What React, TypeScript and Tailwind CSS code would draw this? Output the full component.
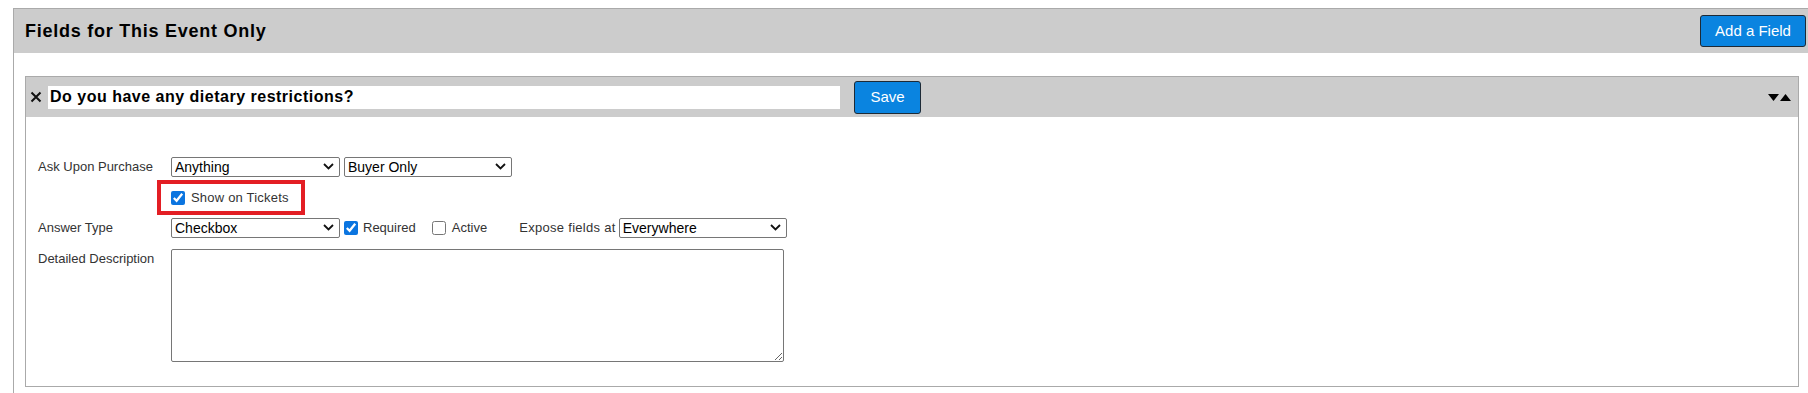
import { ChangeEvent, useState } from "react";

function Select({ value, options, width }: { value: string; options: string[]; width: string }) {
    const [val, setVal] = useState(value);
    return (
        <div className={`relative ${width} h-[20px]`}>
            <select
                value={val}
                onChange={(e: ChangeEvent<HTMLSelectElement>) => setVal(e.target.value)}
                className="appearance-none w-full h-full bg-white border border-[#767676] rounded-[2px] pl-[3px] pr-[20px] text-[14px] leading-[18px] text-black outline-none"
            >
                {options.map((o) => (
                    <option key={o}>{o}</option>
                ))}
            </select>
            <svg className="absolute right-[6px] top-[6px] pointer-events-none" width="11" height="7" viewBox="0 0 11 7">
                <path d="M1 1l4.5 4.5L10 1" fill="none" stroke="#111" strokeWidth="1.8" />
            </svg>
        </div>
    );
}

function Check({ checked }: { checked?: boolean }) {
    return <input type="checkbox" defaultChecked={checked} className="w-[14px] h-[14px] m-0 accent-[#0b75e0]" />;
}

export default function App()
{
    return (
        <div className="w-[1808px] h-[393px] overflow-hidden bg-white pt-[8px] pl-[13px] text-[#222]"
            style={{ fontFamily: '"Liberation Sans", Arial, sans-serif' }}>
            <div className="w-[1800px] h-[400px] border border-[#aaaaaa] border-b-0">
                {/* panel header */}
                <div className="h-[44px] bg-[#cccccc] flex items-center justify-between pl-[11px] pr-[6px]">
                    <h2 className="text-[18px] font-bold text-black tracking-[0.75px]">Fields for This Event Only</h2>
                    <button className="h-[32px] w-[106px] bg-[#0a84e0] border border-[#1d2a36] rounded-[3px] text-white text-[15px]">
                        Add a Field
                    </button>
                </div>

                <div className="pt-[23px] pl-[11px]">
                    <div className="w-[1774px] h-[311px] border border-[#aaaaaa]">
                        {/* field header */}
                        <div className="h-[40px] bg-[#cccccc] flex items-center pl-[4px] pr-[5px]">
                            <span className="w-[18px] flex items-center">
                                <svg width="12" height="12" viewBox="0 0 12 12">
                                    <path d="M1.5 1.5l9 9M10.5 1.5l-9 9" stroke="#111" strokeWidth="2" />
                                </svg>
                            </span>
                            <input
                                defaultValue="Do you have any dietary restrictions?"
                                className="w-[792px] h-[23px] bg-white px-[2px] text-[16px] font-bold text-black tracking-[0.5px] outline-none"
                            />
                            <button className="ml-[14px] h-[33px] w-[67px] bg-[#0a84e0] border border-[#1d2a36] rounded-[3px] text-white text-[15px]">
                                Save
                            </button>
                            <svg className="ml-auto mr-[1px]" width="24" height="9" viewBox="0 0 24 9">
                                <path d="M0 1h11L5.5 8z" fill="#000" />
                                <path d="M12 8h11L17.5 1z" fill="#000" />
                            </svg>
                        </div>

                        {/* field body */}
                        <div className="pl-[12px] pt-[40px] text-[13px] text-[#333]">
                            <div className="flex items-center">
                                <span className="w-[133px]">Ask Upon Purchase</span>
                                <div className="flex gap-[4px]">
                                    <Select value="Anything" options={["Anything", "Once per order", "Once per ticket"]} width="w-[169px]" />
                                    <Select value="Buyer Only" options={["Buyer Only", "Each Attendee"]} width="w-[168px]" />
                                </div>
                            </div>

                            <div className="mt-[3px] ml-[119px] w-[148px] h-[35px] border-[4px] border-[#e31e24] flex items-center gap-[6px] pl-[10px]">
                                <Check checked />
                                <span className="tracking-[0.2px]">Show on Tickets</span>
                            </div>

                            <div className="mt-[3px] flex items-center">
                                <span className="w-[133px]">Answer Type</span>
                                <Select value="Checkbox" options={["Checkbox", "Text", "Dropdown"]} width="w-[169px]" />
                                <div className="ml-[4px] flex items-center gap-[5px]">
                                    <Check checked />
                                    <span>Required</span>
                                </div>
                                <div className="ml-[16px] flex items-center gap-[6px]">
                                    <Check />
                                    <span>Active</span>
                                </div>
                                <span className="ml-[32px] mr-[3px] tracking-[0.3px]">Expose fields at</span>
                                <Select value="Everywhere" options={["Everywhere", "Online only", "Box office only"]} width="w-[168px]" />
                            </div>

                            <div className="mt-[11px] flex items-start">
                                <span className="w-[133px]">Detailed Description</span>
                                <textarea className="w-[613px] h-[113px] border border-[#767676] rounded-[2px] bg-white outline-none" />
                            </div>
                        </div>
                    </div>
                </div>
            </div>
        </div>
    );
}
